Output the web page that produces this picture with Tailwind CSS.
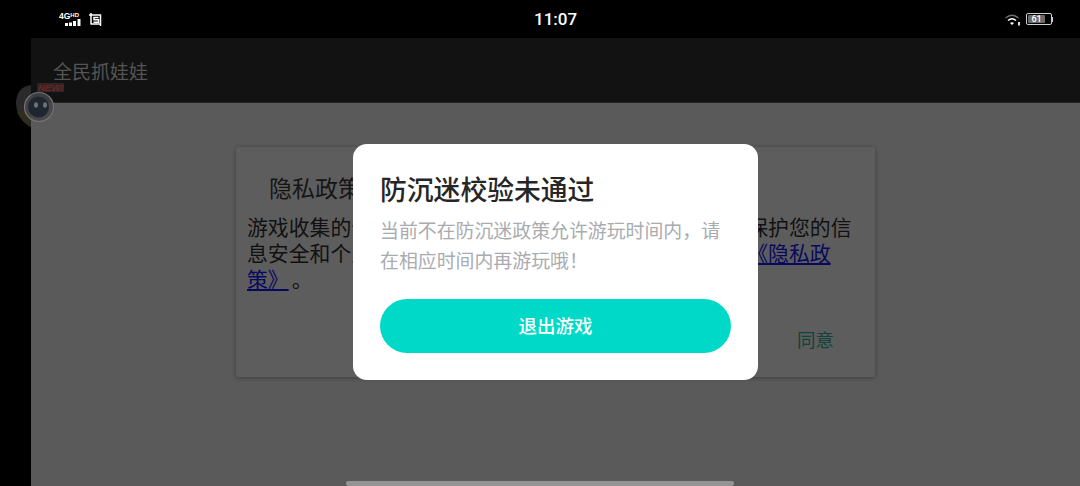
<!DOCTYPE html>
<html lang="zh-CN">
  <head>
    <meta charset="UTF-8" />
    <title>全民抓娃娃</title>
    <script src="https://cdn.jsdelivr.net/npm/@tailwindcss/browser@4"></script>
  </head>
  <body class="relative w-[1080px] h-[486px] overflow-hidden bg-black font-['Noto_Sans_CJK_SC','Noto_Sans',sans-serif] [text-spacing-trim:space-all]">
    <!-- status bar -->
    <div class="h-[38px] flex items-center text-white">
      <div class="w-[534px] flex items-center gap-[8px] pl-[59px]">
        <div class="w-[22px] flex flex-col">
          <div class="flex items-start font-['Liberation_Sans'] font-bold">
            <span class="text-[8.5px] leading-[8px]">4G</span><span class="text-[6px] leading-[6px]">HD</span>
          </div>
          <svg width="22" height="7" viewBox="0 0 22 7" class="mt-[-1px]" fill="#fff">
            <rect x="6" y="4" width="3" height="3" />
            <rect x="10" y="3.5" width="3" height="3.5" />
            <rect x="14" y="2" width="3" height="5" />
            <rect x="18.5" y="0" width="3" height="7" />
          </svg>
        </div>
        <svg width="13" height="13" viewBox="0 0 13 13" fill="none" stroke="#fff">
          <path d="M0 2h12M2 0v11.5M2 11h10M11.5 1.5V13" stroke-width="1.5" />
          <path d="M9.5 4.5H5v2.2h4.5V9.3H4.5" stroke-width="1.5" />
        </svg>
      </div>
      <div class="font-['Roboto'] font-medium text-[17px] leading-none">11:07</div>
      <div class="ml-auto flex items-center gap-[5px] pr-[27px]">
        <svg width="16" height="12" viewBox="0 0 16 12" fill="none" class="mt-[2px]">
          <path d="M0.5 4Q7-1.5 13.5 4" stroke="#6e6e6e" stroke-width="1.4" />
          <path d="M3 6.5Q7 3 11 6.5" stroke="#fff" stroke-width="1.5" />
          <path d="M5 9 7 11 9 9Q7 7.5 5 9Z" fill="#fff" />
          <path d="M14 8v3.5" stroke="#ddd" stroke-width="2" />
        </svg>
        <div class="flex items-center">
          <div class="w-[26px] h-[12px] rounded-[2px] border border-[#cfcfcf] p-px">
            <div class="w-[17px] h-full rounded-[1px] bg-[#6a6a6a] flex items-center justify-center text-[9px] leading-none font-['Roboto'] font-medium">61</div>
          </div>
          <div class="w-px h-[5px] bg-[#cfcfcf]"></div>
        </div>
      </div>
    </div>

    <!-- app area -->
    <div class="ml-[31px] h-[448px] flex flex-col bg-[#5a5a5a]">
      <div class="h-[65px] shrink-0 bg-[#121212] border-b border-[#262626] flex items-center pl-[22px] pt-[2px] text-[19px] text-[#555]">全民抓娃娃</div>
      <div class="pt-[44px] pl-[205px]">
        <div class="w-[639px] h-[230px] rounded-[2px] bg-[#5d5d5d] shadow-[0_1px_5px_rgba(0,0,0,0.3)] pl-[11px] pt-[25px]">
          <div class="pl-[22px] text-[23px] leading-[30px] text-[#151515]">隐私政策</div>
          <p class="mt-[11px] w-[606px] text-[20.85px] leading-[26px] text-[#111]">
            游戏收集的个人信息仅用于提供游戏服务，我们将严格保护您的信息安全和个人隐私，在使用前请您务必仔细阅读我们的<a class="mr-[3px] text-[#08085f] underline">《隐私政策》</a>。
          </p>
          <div class="mt-[35px] pr-[41px] text-right text-[18.5px] leading-[26px] text-[#134239]">同意</div>
        </div>
      </div>
    </div>

    <!-- floating ball -->
    <div class="absolute left-[15px] top-[82px] w-[52px] h-[46px]">
      <svg width="52" height="46" viewBox="0 0 52 46" fill="none">
        <path d="M16 3Q2 5 1 20Q1 37 16 45V24Z" fill="#2a2a2a" />
        <path d="M2 30Q7 41 16 45V30Z" fill="#2e2d1e" />
        <circle cx="24" cy="25" r="14.5" fill="#474749" fill-opacity="0.85" stroke="#737373" stroke-width="1.2" />
        <circle cx="23.5" cy="25" r="10.5" fill="#20262f" />
        <ellipse cx="21" cy="23" rx="2" ry="2.8" fill="#6c727c" />
        <ellipse cx="30" cy="23" rx="2" ry="2.8" fill="#6c727c" />
      </svg>
      <span class="absolute left-[22px] top-px px-px bg-[#2e2626] text-[9.5px] leading-[9px] italic font-bold font-['Liberation_Sans'] text-[#6e2424]">NEW!</span>
    </div>

    <!-- anti-addiction dialog -->
    <div class="absolute left-[353px] top-[144px] w-[405px] h-[236px] rounded-[14px] bg-white px-[27px] pt-[26px]">
      <h2 class="text-[26.8px] font-medium leading-[38px] text-[#262626]">防沉迷校验未通过</h2>
      <p class="mt-[7px] text-[18.9px] leading-[30px] text-[#a9abaf]">当前不在防沉迷政策允许游玩时间内，请在相应时间内再游玩哦！</p>
      <button class="mt-[24px] w-[351px] h-[54px] rounded-full bg-[#00d9c7] text-white text-[18.5px] font-medium">退出游戏</button>
    </div>

    <!-- home indicator -->
    <div class="absolute left-[346px] bottom-0 w-[388px] h-[5px] rounded-full bg-[#949494]"></div>
  </body>
</html>
